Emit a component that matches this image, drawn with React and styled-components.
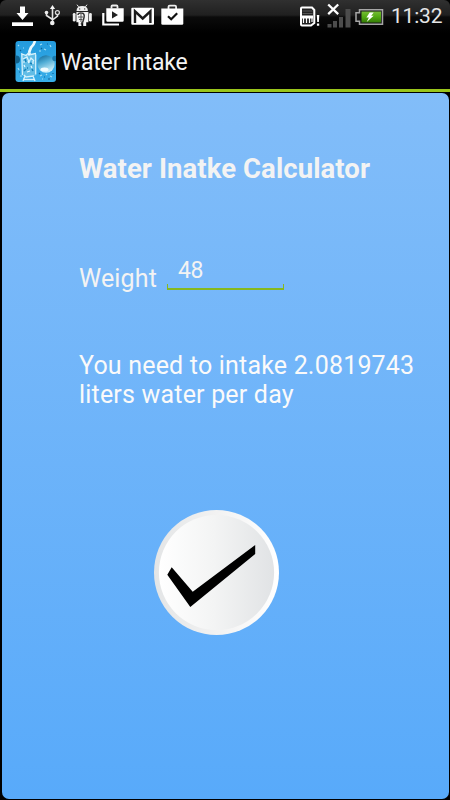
import React, { useState } from "react";
import styled, { createGlobalStyle } from "styled-components";

const StatusIcon = ({ x, width, children }) => (
  <IconSvg width={width} height="34" viewBox={`${x} 0 ${width} 34`}>
    {children}
  </IconSvg>
);

const StatusBar = () => (
  <Status>
    <IconGroup>
      <StatusIcon x={10} width={30}>
        <path d="M20 6.5h5V13h3.5l-6 7-6-7H20z" fill="#fff" />
        <rect x="12" y="22.3" width="21" height="3.7" fill="#fff" />
      </StatusIcon>
      <StatusIcon x={40} width={30}>
        <path d="M52.5 8v15M46.5 13v2.5l6 4M57.5 14.5v1.5l-5 4" fill="none" stroke="#e4e4e4" strokeWidth="1.6" />
        <path d="M52.5 5l2.6 4h-5.2z" fill="#f4f4f4" />
        <circle cx="46.5" cy="12.6" r="1.8" fill="#eee" />
        <circle cx="57.4" cy="12.6" r="2" fill="#222" stroke="#ddd" strokeWidth="1.2" />
        <circle cx="52.3" cy="23" r="2.3" fill="#eee" />
      </StatusIcon>
      <StatusIcon x={70} width={28}>
        <path d="M77 4.7l1.6 2.1M87 4.7l-1.6 2.1" stroke="#eee" strokeWidth="1" />
        <path d="M76.5 11q0-5 5.7-5t5.7 5z" fill="#eee" />
        <path d="M76.4 12h12v10.2h-2.2V26h-3v-3.6h-1.8V26h-3v-3.8h-2z" fill="#f4f4f4" />
        <rect x="72.8" y="13" width="2.8" height="8.6" rx="1.3" fill="#eee" />
        <rect x="89" y="13" width="2.8" height="8.6" rx="1.3" fill="#eee" />
        <circle cx="79.7" cy="8.9" r=".6" fill="#222" />
        <circle cx="84.7" cy="8.9" r=".6" fill="#222" />
        <path d="M78 15q0-2.2 3.4-2 3.4 0 2.7 4.2-.6 4.6-3.1 7.4" fill="none" stroke="#333" strokeWidth="1.5" />
        <path d="M78 17h5M79 19.5h3.5M81 14v8" stroke="#555" strokeWidth="1" />
      </StatusIcon>
      <StatusIcon x={98} width={31}>
        <path d="M103.3 13v11.5H119" fill="none" stroke="#fff" strokeWidth="2.2" />
        <path d="M111.5 8.5v-2q0-1 1-1h4q1 0 1 1v2" fill="none" stroke="#eee" strokeWidth="1.8" />
        <path d="M106.3 8.3h17.4v12.2q0 1.2-1.2 1.2h-15q-1.2 0-1.2-1.2z" fill="#fff" />
        <path d="M112 11.2v7.4l6-3.7z" fill="#222" />
      </StatusIcon>
      <StatusIcon x={129} width={29}>
        <rect x="131.3" y="7.8" width="22.7" height="17" rx="1" fill="#fff" />
        <path d="M135 22.9V11.3l7.7 7.2 7.7-7.2v11.6" fill="none" stroke="#1c1c1c" strokeWidth="2.4" />
      </StatusIcon>
      <StatusIcon x={158} width={30}>
        <path d="M168.5 9V6.8q0-1.2 1.2-1.2h5.2q1.2 0 1.2 1.2V9" fill="none" stroke="#eee" strokeWidth="1.8" />
        <path d="M161.3 8.5h22v15q0 1.3-1.3 1.3h-19.4q-1.3 0-1.3-1.3z" fill="#fff" />
        <path d="M168 16.3l3.2 3 6-6" fill="none" stroke="#111" strokeWidth="2.2" />
      </StatusIcon>
    </IconGroup>
    <IconGroup>
      <StatusIcon x={298} width={27}>
        <path d="M302 7.5h10l2.3 2.5v13l-3.3 2.5h-9q-1 0-1-1v-16q0-1 1-1z" fill="#222" stroke="#fff" strokeWidth="2" />
        <path d="M302.5 11h10M302.5 13.5h10" stroke="#555" strokeWidth="1" />
        <path d="M302 15.5h11v3h-11z" fill="#fff" />
        <path d="M303.5 18v5M306.5 18v5M309.5 18v5M312 18v4" stroke="#fff" strokeWidth="1.2" />
        <path d="M316.8 15h2.5l-.4 7h-1.7zM316.9 23.5h2.3v2.3h-2.3z" fill="#fff" />
      </StatusIcon>
      <StatusIcon x={325} width={28}>
        <path d="M327.5 24h4v3.5h-4zM333 21h4v6.5h-4zM339 17h4v10.5h-4zM345.5 9h5v18.5h-5z" fill="#4c4c4c" />
        <path d="M328.2 4.5l10 9.6M338.2 4.5l-10 9.6" stroke="#fff" strokeWidth="2.3" />
      </StatusIcon>
      <StatusIcon x={353} width={35}>
        <defs>
          <linearGradient id="charge" x2="0" y2="1">
            <stop offset="0" stopColor="#76bd35" />
            <stop offset=".5" stopColor="#51a812" />
            <stop offset="1" stopColor="#347c06" />
          </linearGradient>
        </defs>
        <path d="M359.5 9.7h23v14.6h-23v-3H356v-8.6h3.5z" fill="#171717" stroke="#a6a6a6" strokeWidth="1.5" />
        <rect x="361.5" y="11.5" width="19.5" height="11" fill="url(#charge)" />
        <path d="M369.7 12.5h4l-2.5 3.2h2.5l-7 6.3 2.2-4.5h-2.5z" fill="#fff" />
      </StatusIcon>
      <Clock>11:32</Clock>
    </IconGroup>
  </Status>
);

const WaterLogo = () => (
  <IconSvg width="41" height="41" viewBox="0 0 41 41">
    <defs>
      <clipPath id="tile"><rect x=".5" width="40.5" height="41" rx="3" /></clipPath>
      <linearGradient id="sea" x2="0" y2="1">
        <stop offset="0" stopColor="#249bdd" />
        <stop offset="1" stopColor="#38aee9" />
      </linearGradient>
      <linearGradient id="bubble" x1=".2" x2=".6" y2="1">
        <stop offset="0" stopColor="#176f9f" />
        <stop offset=".4" stopColor="#4eacd5" />
        <stop offset="1" stopColor="#d5f4fc" />
      </linearGradient>
    </defs>
    <g clipPath="url(#tile)">
      <rect width="41" height="41" fill="url(#sea)" />
      <path d="M3 4l1 1M8 7h1M25 4l2-1M29 8l2 1M35 4l1 2M24 10h2M3 27l1 2M5 35h2M25 35l2-1M31 33l1 1M35 35l2 1M36 28l1 1M27 38h1M8 38h1" stroke="#a1ddf5" strokeWidth="1.2" />
      <path d="M5 9l1 1M32 3h1M26 7l1 1M4 31h1M29 36h1M33 38h2M38 32v1M24 32l1 1" stroke="#10659a" strokeWidth="1.2" />
      <circle cx="1" cy="18.5" r="4" fill="#12608b" />
      <path d="M6.5 13.5h14v21.5h-13z" fill="#62bde6" />
      <path d="M20 0q-1 4-4 6.5-2 3.5-2 8" fill="none" stroke="#edfaff" strokeWidth="2.7" />
      <path d="M6 12.5l5 2 3-3 2 2 5-1M6.8 13l.6 21M20.7 13.5v20M8 18l4-2 2 5 2-4 3 3M9 34l2 2 8-1M10 35l-2 5M18 35l2 5M9 38.5h10" fill="none" stroke="#d6f2fc" strokeWidth="1.3" />
      <path d="M10 18l1 3M15 22l2 1M12 27h1M17 28l1 2M9 30l2-2" stroke="#1782ba" strokeWidth="1.5" />
      <path d="M13 20l1 2M9 24l1 2M16 25l1 2M12 31l3-1M8 21h2M18 20v3" stroke="#e8f9ff" strokeWidth="1.2" />
      <circle cx="31" cy="23" r="8.7" fill="url(#bubble)" />
      <ellipse cx="29.5" cy="28.5" rx="4" ry="2" fill="#f1fcff" />
      <circle cx="40" cy="17.5" r="2.7" fill="#1979ab" />
    </g>
  </IconSvg>
);

const CheckMark = () => (
  <IconSvg width="126" height="126" viewBox="0 0 126 126">
    <defs>
      <linearGradient id="face" x2="1">
        <stop offset="0" stopColor="#fff" />
        <stop offset=".48" stopColor="#f3f4f4" />
        <stop offset="1" stopColor="#e1e3e5" />
      </linearGradient>
      <linearGradient id="rim" x2="1">
        <stop offset="0" stopColor="#e3e5e6" />
        <stop offset=".5" stopColor="#f2f2f2" />
        <stop offset="1" stopColor="#fff" />
      </linearGradient>
    </defs>
    <circle cx="62.5" cy="62.5" r="62.5" fill="url(#rim)" />
    <circle cx="62.5" cy="62.5" r="57.6" fill="url(#face)" />
    <path d="M17.7 57.3L38.7 81.7 101.2 35v9L36.3 97 13.3 64.7z" fill="#000" />
  </IconSvg>
);

const App = () => {
  const [weight, setWeight] = useState("48");

  return (
    <Phone>
      <GlobalStyle />
      <StatusBar />
      <ActionBar>
        <WaterLogo />
        <AppName>Water Intake</AppName>
      </ActionBar>
      <Screen>
        <Title>Water Inatke Calculator</Title>
        <WeightRow>
          <Label htmlFor="weight">Weight</Label>
          <Field>
            <WeightInput id="weight" value={weight} onChange={(e) => setWeight(e.target.value)} />
          </Field>
        </WeightRow>
        <Result>You need to intake 2.0819743 liters water per day</Result>
        <CheckButton aria-label="Calculate">
          <CheckMark />
        </CheckButton>
      </Screen>
    </Phone>
  );
};

export default App;

// Styled Components
const GlobalStyle = createGlobalStyle`
  * {
    box-sizing: border-box;
  }

  body {
    margin: 0;
    background: #000;
    font-family: Roboto, sans-serif;
  }
`;

const Phone = styled.div`
  width: 450px;
  height: 800px;
  display: flex;
  flex-direction: column;
  background: #000;
  overflow: hidden;
`;

const Status = styled.div`
  height: 34px;
  flex-shrink: 0;
  display: flex;
  justify-content: space-between;
  padding: 0 8px 0 10px;
  border-radius: 6px 6px 0 0;
  background: linear-gradient(#303030 0, #202020 15px, #0b0b0b 17px, #000 33px);
`;

const IconGroup = styled.div`
  display: flex;
`;

const IconSvg = styled.svg`
  display: block;
  flex-shrink: 0;
`;

const Clock = styled.span`
  width: 54px;
  padding-left: 3px;
  font-size: 21px;
  line-height: 33px;
  letter-spacing: -0.2px;
  color: #e6e6e6;
  white-space: nowrap;
`;

const ActionBar = styled.div`
  height: 58px;
  flex-shrink: 0;
  display: flex;
  align-items: flex-start;
  padding: 7px 0 0 15px;
  border-bottom: 3px solid #9ac51b;
`;

const AppName = styled.span`
  margin: 0 0 0 5px;
  font-size: 23px;
  line-height: 43px;
  letter-spacing: -0.15px;
  color: #f3f3f3;
`;

const Screen = styled.div`
  flex: 1;
  display: flex;
  flex-direction: column;
  align-items: flex-start;
  margin: 1px 1px 1px 2px;
  padding: 60px 20px 0 77px;
  border-radius: 7px;
  background: linear-gradient(#82bdf9, #58aafa);
`;

const Title = styled.h1`
  margin: 0;
  font-size: 27.5px;
  line-height: 32px;
  letter-spacing: 0.08px;
  font-weight: 700;
  color: #f3f3f3;
  white-space: nowrap;
`;

const WeightRow = styled.div`
  display: flex;
  height: 42px;
  margin-top: 71px;
`;

const Label = styled.label`
  width: 88px;
  padding-top: 8px;
  font-size: 25px;
  line-height: 30px;
  letter-spacing: 0.15px;
  color: #f3f3f3;
`;

const Field = styled.div`
  display: flex;
  flex-direction: column;
  width: 117px;
  height: 34px;
  padding: 0 11px;

  /* short bracket under the number */
  &::after {
    content: "";
    flex-shrink: 0;
    height: 4px;
    margin: 0 -11px;
    border: 1px solid #86b81f;
    border-bottom-width: 2px;
    border-top: none;
  }
`;

const WeightInput = styled.input`
  display: block;
  width: 100%;
  height: 28px;
  padding: 0;
  border: none;
  outline: none;
  background: transparent;
  font-family: inherit;
  font-size: 23px;
  letter-spacing: -0.4px;
  color: #f3f3f3;
`;

const Result = styled.p`
  width: 350px;
  margin: 53px 0 0;
  font-size: 25px;
  line-height: 29px;
  letter-spacing: 0.19px;
  color: #fafafa;
`;

const CheckButton = styled.button`
  margin: 101px 0 0 75px;
  padding: 0;
  border: none;
  border-radius: 50%;
  background: transparent;
  cursor: pointer;
`;
